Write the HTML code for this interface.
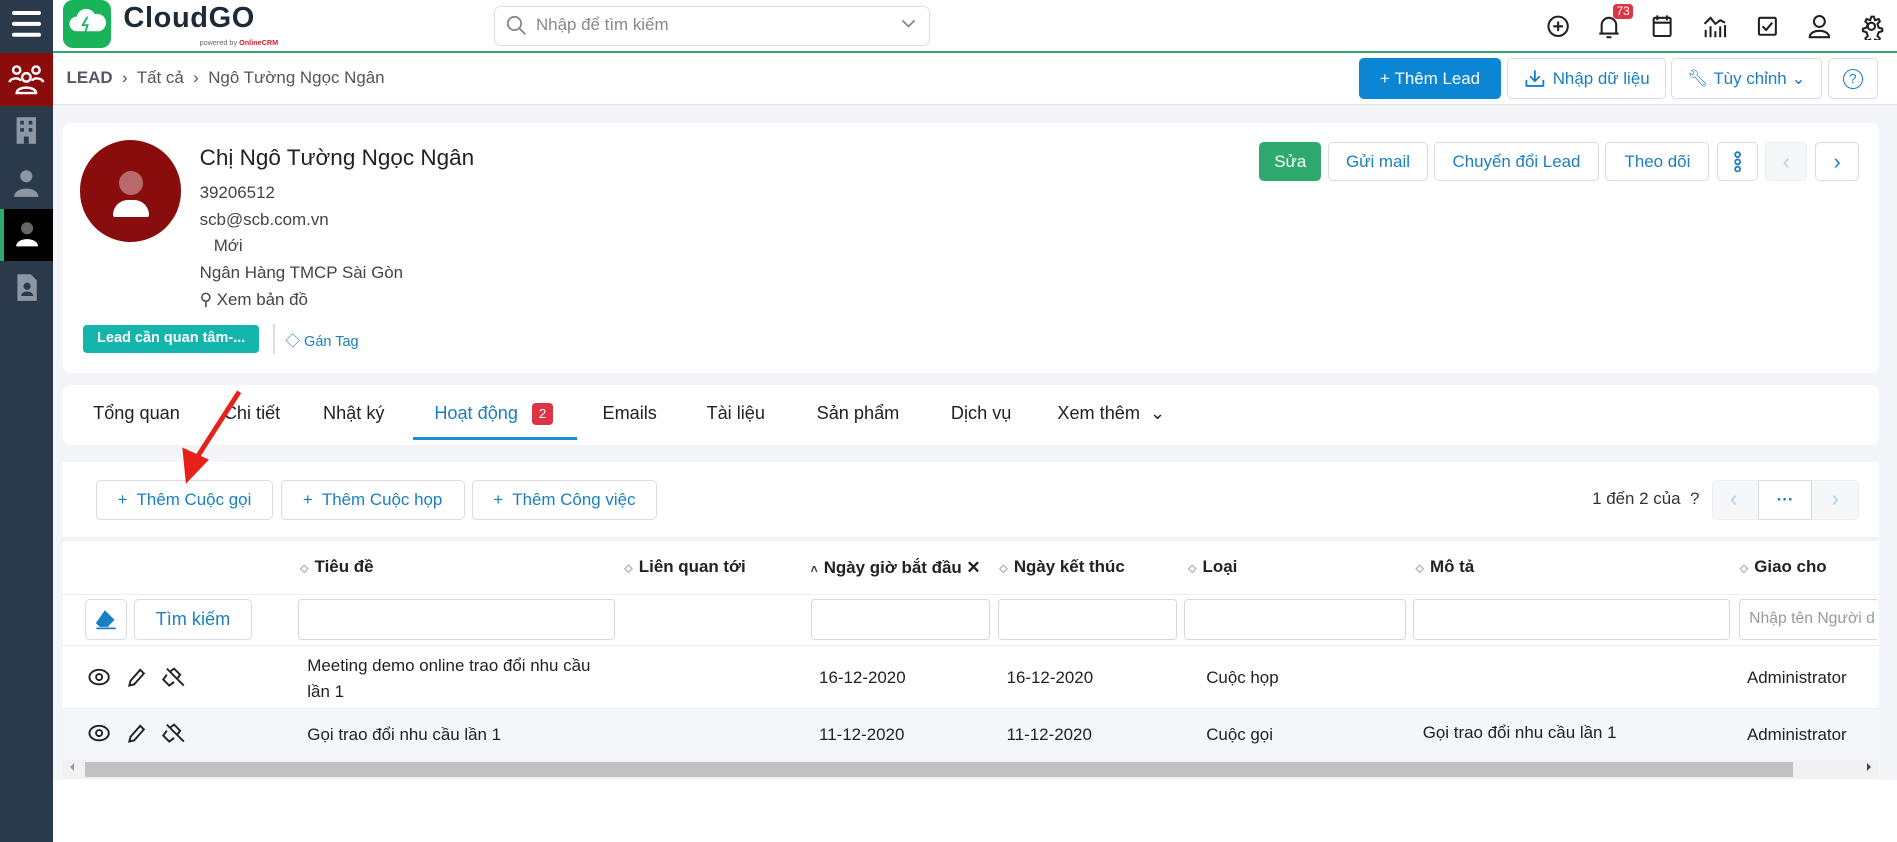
<!DOCTYPE html>
<html><head><meta charset="utf-8">
<style>
html,body{margin:0;padding:0;}
body{width:1568px;height:696px;zoom:1.20982;overflow:hidden;background:#fff;font-family:"Liberation Sans","Noto Sans CJK SC",sans-serif;color:#333;position:relative;font-size:14px}
.a{position:absolute}
.btn{position:absolute;border:1px solid #d8dde3;border-radius:4px;background:#fff;color:#1a7fc1;font-size:14px;display:flex;align-items:center;justify-content:center;box-sizing:border-box}
.card{position:absolute;background:#fff;border-radius:6px}
.inp{position:absolute;border:1px solid #d5d9de;border-radius:3px;background:#fff;box-sizing:border-box;height:34px;top:495px}
.th{position:absolute;top:460px;font-weight:bold;font-size:14px;color:#222}
.th i{font-style:normal;color:#aaa;font-size:10px;margin-right:5px}
</style></head><body>
<div class="a" style="left:0;top:0;width:44px;height:696px;background:#2b3a4a"></div>
<div class="a" style="left:10px;top:9px;width:24px;height:3px;background:#fff;box-shadow:0 9px 0 #fff,0 18px 0 #fff;border-radius:2px"></div>
<div class="a" style="left:0;top:44px;width:44px;height:44px;background:#8b0c0c"></div>
<svg class="a" style="left:6px;top:48px" width="32" height="36" viewBox="0 0 32 36" fill="none" stroke="#fff" stroke-width="2"><circle cx="8" cy="10" r="3"/><circle cx="24" cy="10" r="3"/><circle cx="16" cy="16" r="3.5"/><path d="M2 20c1-4 9-4 9-1M30 20c-1-4-9-4-9-1M8 29c0-6 16-6 16 0z"/></svg>
<svg class="a" style="left:11px;top:96px" width="22" height="24" viewBox="0 0 22 24"><rect x="3" y="1" width="16" height="22" fill="#8c97a3"/><g fill="#2b3a4a"><rect x="6" y="4" width="3" height="3"/><rect x="13" y="4" width="3" height="3"/><rect x="6" y="10" width="3" height="3"/><rect x="13" y="10" width="3" height="3"/><rect x="9" y="17" width="4" height="6"/></g></svg>
<svg class="a" style="left:11px;top:140px" width="22" height="24" viewBox="0 0 22 24" fill="#8c97a3"><circle cx="11" cy="6" r="5"/><path d="M1 23c0-9 20-9 20 0z"/></svg>
<div class="a" style="left:0;top:173px;width:44px;height:43px;background:#000"></div>
<div class="a" style="left:0;top:173px;width:3px;height:43px;background:#2eaa6e"></div>
<svg class="a" style="left:12px;top:183px" width="20" height="24" viewBox="0 0 20 24"><circle cx="10" cy="6" r="5" fill="#666"/><path d="M1 21c0-8 18-8 18 0z" fill="#fff"/></svg>
<svg class="a" style="left:12px;top:226px" width="20" height="24" viewBox="0 0 20 24" fill="#8c97a3"><path d="M2 1h11l5 5v17H2z"/><circle cx="10" cy="11" r="3" fill="#2b3a4a"/><path d="M5 19c0-5 10-5 10 0z" fill="#2b3a4a"/></svg>
<div class="a" style="left:44px;top:42px;width:1524px;height:2px;background:#2eaa6e"></div>
<div class="a" style="left:52px;top:0;width:40px;height:40px;background:#19b35a;border-radius:8px"></div>
<svg class="a" style="left:55px;top:6px" width="34" height="26" viewBox="0 0 34 26"><path d="M8 20a6 6 0 0 1 0-12a8 8 0 0 1 15-2a6 6 0 0 1 4 14z" fill="#fff"/><path d="M17 8l-4 7h4l-2 6" stroke="#19b35a" stroke-width="1.5" fill="none"/></svg>
<div class="a" style="left:102px;top:2px;font-size:24px;font-weight:bold;color:#1e2a38;letter-spacing:0.5px">CloudGO</div>
<div class="a" style="left:165px;top:31px;font-size:6px;color:#666">powered by <b style="color:#d02030">OnlineCRM</b></div>
<div class="a" style="left:408px;top:5px;width:361px;height:33px;border:1px solid #dcdfe3;border-radius:5px;box-sizing:border-box"></div>
<svg class="a" style="left:418px;top:12px" width="18" height="18" viewBox="0 0 18 18" fill="none" stroke="#888" stroke-width="1.5"><circle cx="7" cy="7" r="5.5"/><path d="M11 11l5 5"/></svg>
<div class="a" style="left:443px;top:12px;font-size:14px;color:#888">Nhập để tìm kiếm</div>
<svg class="a" style="left:744px;top:15px" width="14" height="10" viewBox="0 0 14 10" fill="none" stroke="#888" stroke-width="1.5"><path d="M2 2l5 5 5-5"/></svg>
<svg class="a" style="left:1278px;top:11px" width="280" height="22" viewBox="0 0 280 22" fill="none" stroke="#222" stroke-width="1.7">
<circle cx="10" cy="11" r="8"/><path d="M10 7v8M6 11h8"/>
<path d="M46 17V10a6 6 0 0 1 12 0v7zM44 17h16M50 20h4"/>
<rect x="89" y="4" width="14" height="15" rx="1"/><path d="M89 8h14M92 2v4M100 2v4" />
<path d="M132 20v-6M136 20v-9M140 20v-5M144 20v-9M148 20V10M131 9l5-5 4 5 4-3 4 2"/>
<rect x="176" y="4" width="14" height="14" rx="1"/><path d="M179 11l3 3 5-6"/>
<circle cx="226" cy="7" r="4.5"/><path d="M218 20c0-7 16-7 16 0z"/>
<circle cx="269" cy="11" r="3"/><path d="M269 3l2 0 1 3 3-1 1 2-2 2 1 3 3 1v2l-3 1-1 3 2 2-1 2-3-1-1 3h-2l-1-3-3 1-1-2 2-2-1-3-3-1v-2l3-1 1-3-2-2 1-2 3 1z"/>
</svg>
<div class="a" style="left:1333px;top:3px;background:#dc3545;color:#fff;font-size:10px;border-radius:3px;padding:0 3px;line-height:13px">73</div>
<div class="a" style="left:44px;top:86px;width:1524px;height:1px;background:#e2e5e9"></div>
<div class="a" style="left:44px;top:87px;width:1524px;height:558px;background:#f3f5f8"></div>
<div class="a" style="left:55px;top:56px;font-size:14px;color:#555"><b style="color:#556">LEAD</b> &nbsp;›&nbsp; Tất cả &nbsp;›&nbsp; Ngô Tường Ngọc Ngân</div>
<div class="btn" style="left:1123px;top:48px;width:118px;height:34px;background:#0a86d4;color:#fff;border-color:#0a86d4">+&nbsp;Thêm Lead</div>
<div class="btn" style="left:1246px;top:48px;width:131px;height:34px"><svg width="18" height="16" viewBox="0 0 18 16" fill="none" stroke="#1a7fc1" stroke-width="1.5" style="margin-right:6px"><path d="M9 1v9M5 6l4 4 4-4M2 9v5h14V9"/></svg>Nhập dữ liệu</div>
<div class="btn" style="left:1381px;top:48px;width:125px;height:34px">🔧︎&nbsp;Tùy chỉnh&nbsp;⌄</div>
<div class="btn" style="left:1511px;top:48px;width:41px;height:34px"><span style="border:1.5px solid #1a7fc1;border-radius:50%;width:15px;height:15px;font-size:11px;display:flex;align-items:center;justify-content:center">?</span></div>
<div class="card" style="left:52px;top:102px;width:1501px;height:206px"></div>
<div class="a" style="left:66px;top:116px;width:84px;height:84px;border-radius:50%;background:#8a0d0d"></div>
<div class="a" style="left:98px;top:141px;width:20px;height:20px;border-radius:50%;background:#b86a6a"></div>
<div class="a" style="left:93px;top:165px;width:30px;height:14px;border-radius:15px 15px 2px 2px;background:#fff"></div>
<div class="a" style="left:165px;top:120px;font-size:18.6px;color:#222">Chị Ngô Tường Ngọc Ngân</div>
<div class="a" style="left:165px;top:149px;font-size:14px;color:#444;line-height:22px">39206512<br>scb@scb.com.vn<br>&nbsp;&nbsp;&nbsp;Mới<br>Ngân Hàng TMCP Sài Gòn<br>⚲ Xem bản đồ</div>
<div class="a" style="left:69px;top:269px;width:145px;height:23px;background:#14b5ad;border-radius:3px;color:#fff;font-size:12px;font-weight:bold;line-height:23px;text-align:center">Lead cần quan tâm-...</div>
<div class="a" style="left:226px;top:268px;width:1px;height:25px;background:#ddd"></div>
<div class="a" style="left:236px;top:273px;font-size:12px;color:#1a7fc1">◇ Gán Tag</div>
<div class="btn" style="left:1041px;top:117px;width:51px;height:33px;background:#2eaa6e;color:#fff;border-color:#2eaa6e">Sửa</div>
<div class="btn" style="left:1098px;top:117px;width:82px;height:33px">Gửi mail</div>
<div class="btn" style="left:1185px;top:117px;width:137px;height:33px">Chuyển đổi Lead</div>
<div class="btn" style="left:1327px;top:117px;width:86px;height:33px">Theo dõi</div>
<div class="btn" style="left:1419px;top:117px;width:34px;height:33px"><svg width="6" height="18" viewBox="0 0 6 18" fill="none" stroke="#1a7fc1" stroke-width="1.5"><circle cx="3" cy="3" r="2"/><circle cx="3" cy="9" r="2"/><circle cx="3" cy="15" r="2"/></svg></div>
<div class="btn" style="left:1459px;top:117px;width:35px;height:33px;background:#f5f7f9;color:#b5d5ee;border-color:#eee;font-size:18px">‹</div>
<div class="btn" style="left:1500px;top:117px;width:37px;height:33px;font-size:18px">›</div>
<div class="card" style="left:52px;top:318px;width:1501px;height:50px"></div>
<div class="a" style="left:77px;top:333px;font-size:15px;color:#222">Tổng quan</div>
<div class="a" style="left:185px;top:333px;font-size:15px;color:#222">Chi tiết</div>
<div class="a" style="left:267px;top:333px;font-size:15px;color:#222">Nhật ký</div>
<div class="a" style="left:359px;top:333px;font-size:15px;color:#1a7fc1">Hoạt động</div>
<div class="a" style="left:440px;top:333px;width:17px;height:18px;background:#dc3545;color:#fff;font-size:11px;border-radius:3px;text-align:center;line-height:18px">2</div>
<div class="a" style="left:341px;top:361px;width:136px;height:3px;background:#1a8fd8"></div>
<div class="a" style="left:498px;top:333px;font-size:15px;color:#222">Emails</div>
<div class="a" style="left:584px;top:333px;font-size:15px;color:#222">Tài liệu</div>
<div class="a" style="left:675px;top:333px;font-size:15px;color:#222">Sản phẩm</div>
<div class="a" style="left:786px;top:333px;font-size:15px;color:#222">Dịch vụ</div>
<div class="a" style="left:874px;top:333px;font-size:15px;color:#222">Xem thêm &nbsp;⌄</div>
<div class="a" style="left:52px;top:382px;width:1501px;height:263px;background:#fff"></div>
<div class="btn" style="left:79px;top:397px;width:147px;height:33px">+&nbsp; Thêm Cuộc gọi</div>
<div class="btn" style="left:232px;top:397px;width:152px;height:33px">+&nbsp; Thêm Cuộc họp</div>
<div class="btn" style="left:390px;top:397px;width:153px;height:33px">+&nbsp; Thêm Công việc</div>
<div class="a" style="left:1316px;top:404px;font-size:14px;color:#333">1 đến 2 của &nbsp;?</div>
<div class="btn" style="left:1415px;top:397px;width:122px;height:33px;background:#f5f7f9;border-color:#eee"></div>
<div class="btn" style="left:1453px;top:397px;width:45px;height:33px;border-radius:0;color:#1a7fc1;font-weight:bold">···</div>
<div class="a" style="left:1430px;top:402px;color:#a8d0ee;font-size:18px">‹</div>
<div class="a" style="left:1514px;top:402px;color:#a8d0ee;font-size:18px">›</div>
<div class="a" style="left:52px;top:444px;width:1501px;height:3px;background:#f0f2f5"></div>
<div class="th" style="left:248px"><i>⬦</i>Tiêu đề</div>
<div class="th" style="left:516px"><i>⬦</i>Liên quan tới</div>
<div class="th" style="left:670px"><i style="color:#333">˄</i>Ngày giờ bắt đầu ✕</div>
<div class="th" style="left:826px"><i>⬦</i>Ngày kết thúc</div>
<div class="th" style="left:982px"><i>⬦</i>Loại</div>
<div class="th" style="left:1170px"><i>⬦</i>Mô tả</div>
<div class="th" style="left:1438px"><i>⬦</i>Giao cho</div>
<div class="a" style="left:52px;top:491px;width:1501px;height:1px;background:#eceef1"></div>
<div class="btn" style="left:70px;top:495px;width:35px;height:34px"><svg width="20" height="18" viewBox="0 0 20 18"><path d="M9 1l8 8-5 5H5L2 11z" fill="#1a7fc1"/><path d="M2 11l3 3h7" stroke="#1a7fc1" fill="none" stroke-width="1.5"/><path d="M2 16h16" stroke="#1a7fc1" stroke-width="1.5"/></svg></div>
<div class="btn" style="left:111px;top:495px;width:97px;height:34px;font-size:15px">Tìm kiếm</div>
<div class="inp" style="left:246px;width:262px"></div>
<div class="inp" style="left:670px;width:148px"></div>
<div class="inp" style="left:825px;width:148px"></div>
<div class="inp" style="left:979px;width:183px"></div>
<div class="inp" style="left:1168px;width:262px"></div>
<div class="inp" style="left:1437px;width:116px;border-right:none;overflow:hidden;color:#999;font-size:13px;line-height:32px;padding-left:8px;white-space:nowrap">Nhập tên Người d</div>
<div class="a" style="left:52px;top:533px;width:1501px;height:1px;background:#eceef1"></div>
<div class="a" style="left:52px;top:585px;width:1501px;height:43px;background:#f4f6f9;border-top:1px solid #eceef1"></div>
<svg class="a" style="left:72px;top:550px" width="90" height="20" viewBox="0 0 90 20" fill="none" stroke="#222" stroke-width="1.6"><ellipse cx="10" cy="10" rx="8" ry="6"/><circle cx="10" cy="10" r="2.5"/><path d="M35 17l1-4 8-9 3 3-8 9z"/><path d="M68 6l4-3 5 5-3 4M72 14l-4 3-5-5 3-4M66 3l14 14"/></svg>
<svg class="a" style="left:72px;top:596px" width="90" height="20" viewBox="0 0 90 20" fill="none" stroke="#222" stroke-width="1.6"><ellipse cx="10" cy="10" rx="8" ry="6"/><circle cx="10" cy="10" r="2.5"/><path d="M35 17l1-4 8-9 3 3-8 9z"/><path d="M68 6l4-3 5 5-3 4M72 14l-4 3-5-5 3-4M66 3l14 14"/></svg>
<div class="a" style="left:254px;top:540px;font-size:14px;line-height:21px;color:#222">Meeting demo online trao đổi nhu cầu<br>lần 1</div>
<div class="a" style="left:677px;top:552px;color:#222">16-12-2020</div>
<div class="a" style="left:832px;top:552px;color:#222">16-12-2020</div>
<div class="a" style="left:997px;top:552px;color:#222">Cuộc họp</div>
<div class="a" style="left:1444px;top:552px;color:#222">Administrator</div>
<div class="a" style="left:254px;top:599px;color:#222">Gọi trao đổi nhu cầu lần 1</div>
<div class="a" style="left:677px;top:599px;color:#222">11-12-2020</div>
<div class="a" style="left:832px;top:599px;color:#222">11-12-2020</div>
<div class="a" style="left:997px;top:599px;color:#222">Cuộc gọi</div>
<div class="a" style="left:1176px;top:598px;color:#222">Gọi trao đổi nhu cầu lần 1</div>
<div class="a" style="left:1444px;top:599px;color:#222">Administrator</div>
<div class="a" style="left:52px;top:628px;width:1501px;height:16px;background:#f1f1f1"></div>
<div class="a" style="left:70px;top:630px;width:1412px;height:12px;background:#c1c1c1"></div>
<div class="a" style="left:58px;top:631px;width:0;height:0;border:4px solid transparent;border-right-color:#999;border-left:0"></div>
<div class="a" style="left:1543px;top:631px;width:0;height:0;border:4px solid transparent;border-left-color:#444;border-right:0"></div>
<svg class="a" style="left:140px;top:320px" width="70" height="90" viewBox="0 0 70 90"><path d="M58 4L22 60" stroke="#e8201a" stroke-width="4" fill="none"/><path d="M14 80L11 50L33 60z" fill="#e8201a"/></svg>
</body></html>
